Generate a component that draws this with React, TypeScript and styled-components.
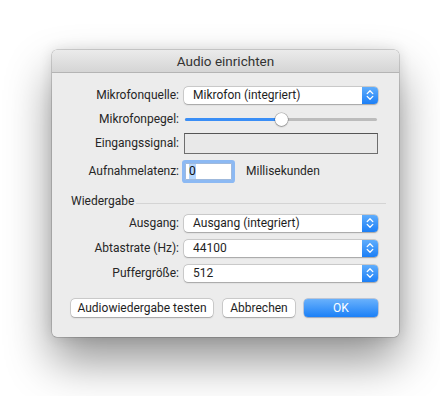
import React from "react";
import styled, { createGlobalStyle } from "styled-components";

const GlobalStyle = createGlobalStyle`
  html, body {
    margin: 0;
    padding: 0;
    background: #ffffff;
  }
  body {
    font-family: "Roboto", "Liberation Sans", sans-serif;
    font-size: 12px;
    color: #222;
  }
`;

const Page = styled.div`
  width: 440px;
  height: 396px;
  overflow: hidden;
  padding: 50px 0 0 52px;
  box-sizing: border-box;
`;

const Window = styled.div`
  width: 347px;
  height: 287px;
  background: #ececec;
  border-radius: 5px;
  box-shadow: 0 24px 46px rgba(0, 0, 0, 0.42), 0 0 14px rgba(0, 0, 0, 0.12),
    0 0 0 0.5px rgba(0, 0, 0, 0.28);
  display: flex;
  flex-direction: column;
  overflow: hidden;
`;

const TitleBar = styled.div`
  height: 22px;
  background: linear-gradient(#ebebeb, #d5d5d5);
  border-bottom: 1px solid #b4b4b4;
  display: flex;
  align-items: center;
  justify-content: center;
  font-size: 13.5px;
  color: #333;
`;

const Body = styled.div`
  display: flex;
  flex-direction: column;
  padding: 8px 21px 0 0;
`;

const Row = styled.div<{ $h: number; $mt?: number }>`
  display: flex;
  align-items: center;
  gap: 5px;
  height: ${(p) => p.$h}px;
  margin-top: ${(p) => p.$mt ?? 0}px;
`;

const Label = styled.div`
  width: 127px;
  text-align: right;
  color: #262626;
  white-space: nowrap;
`;

const Popup = styled.div`
  width: 194px;
  height: 17px;
  box-sizing: border-box;
  display: flex;
  align-items: center;
  background: #fff;
  border-radius: 4px;
  box-shadow: 0 0 0 0.5px rgba(0, 0, 0, 0.22), 0 0.5px 1.5px rgba(0, 0, 0, 0.22);
  overflow: hidden;
`;

const PopupText = styled.div`
  flex: 1;
  padding-left: 9px;
  color: #1e1e1e;
  white-space: nowrap;
`;

const Stepper = styled.div`
  width: 16px;
  height: 100%;
  background: linear-gradient(#5fadfc, #1c7ff6);
  display: flex;
  align-items: center;
  justify-content: center;
`;

const SliderTrack = styled.div`
  position: relative;
  width: 192px;
  margin-left: 1px;
  height: 3px;
  border-radius: 2px;
  background: #bcbcbc;
`;

const SliderFill = styled.div`
  height: 100%;
  border-radius: 2px;
  background: #3a8ef6;
`;

const Knob = styled.div`
  position: absolute;
  top: 50%;
  width: 13px;
  height: 13px;
  margin: -6.5px 0 0 -6.5px;
  border-radius: 50%;
  background: #fff;
  box-shadow: 0 0 0 0.5px rgba(0, 0, 0, 0.3), 0 1px 1.5px rgba(0, 0, 0, 0.25);
`;

const Meter = styled.div`
  width: 194px;
  height: 21px;
  box-sizing: border-box;
  border: 1px solid #6e6e6e;
  border-top-color: #555;
  background: #e9e9e9;
`;

const Field = styled.div`
  width: 47px;
  height: 17px;
  box-sizing: border-box;
  background: #fff;
  border: 1px solid #9fb9dc;
  box-shadow: 0 0 0 3px #8cb9f3;
  border-radius: 1px;
  margin-left: 1px;
  display: flex;
  align-items: center;
  padding-left: 3px;
`;

const Selected = styled.span`
  background: #b4d6fe;
  color: #111;
  line-height: 15px;
`;

const Unit = styled.div`
  margin-left: 9px;
  color: #262626;
`;

const Section = styled.div`
  display: flex;
  align-items: center;
  margin: 11px 0 3px 19px;
  gap: 2px;
  height: 16px;
`;

const SectionTitle = styled.div`
  color: #262626;
`;

const Rule = styled.div`
  flex: 1;
  height: 1px;
  margin-top: 4px;
  margin-right: -8px;
  background: #d4d4d4;
`;

const Buttons = styled.div`
  display: flex;
  align-items: center;
  margin: 15px 0 0 19px;
  height: 18px;
`;

const Button = styled.div<{ $w: number; $primary?: boolean; $ml?: number }>`
  width: ${(p) => p.$w}px;
  height: 18px;
  margin-left: ${(p) => p.$ml ?? 0}px;
  box-sizing: border-box;
  border-radius: 4px;
  display: flex;
  align-items: center;
  justify-content: center;
  white-space: nowrap;
  color: ${(p) => (p.$primary ? "#fff" : "#1e1e1e")};
  background: ${(p) =>
    p.$primary ? "linear-gradient(#69b1fc, #1b80f7)" : "#fff"};
  box-shadow: ${(p) =>
    p.$primary
      ? "0 0 0 0.5px rgba(0, 60, 160, 0.35), 0 0.5px 1.5px rgba(0, 0, 0, 0.2)"
      : "0 0 0 0.5px rgba(0, 0, 0, 0.22), 0 0.5px 1.5px rgba(0, 0, 0, 0.22)"};
`;

const Arrows = () => (
  <svg width="8" height="12" viewBox="0 0 8 12">
    <path
      d="M1.2 4.6 L4 1.8 L6.8 4.6 M1.2 7.4 L4 10.2 L6.8 7.4"
      fill="none"
      stroke="#fff"
      strokeWidth="1.3"
      strokeLinecap="round"
      strokeLinejoin="round"
    />
  </svg>
);

function Select({ value }: { value: string }) {
  return (
    <Popup>
      <PopupText>{value}</PopupText>
      <Stepper>
        <Arrows />
      </Stepper>
    </Popup>
  );
}

const level = 0.5;

export default function App() {
  return (
    <Page>
      <GlobalStyle />
      <Window>
        <TitleBar>Audio einrichten</TitleBar>
        <Body>
          <Row $h={22} $mt={3}>
            <Label>Mikrofonquelle:</Label>
            <Select value="Mikrofon (integriert)" />
          </Row>
          <Row $h={22} $mt={2}>
            <Label>Mikrofonpegel:</Label>
            <SliderTrack>
              <SliderFill style={{ width: `${level * 100}%` }} />
              <Knob style={{ left: `${level * 100}%` }} />
            </SliderTrack>
          </Row>
          <Row $h={22} $mt={2}>
            <Label>Eingangssignal:</Label>
            <Meter />
          </Row>
          <Row $h={22} $mt={6}>
            <Label>Aufnahmelatenz:</Label>
            <Field>
              <Selected>0</Selected>
            </Field>
            <Unit>Millisekunden</Unit>
          </Row>
          <Section>
            <SectionTitle>Wiedergabe</SectionTitle>
            <Rule />
          </Section>
          <Row $h={22}>
            <Label>Ausgang:</Label>
            <Select value="Ausgang (integriert)" />
          </Row>
          <Row $h={22} $mt={3}>
            <Label>Abtastrate (Hz):</Label>
            <Select value="44100" />
          </Row>
          <Row $h={22} $mt={3}>
            <Label>Puffergröße:</Label>
            <Select value="512" />
          </Row>
          <Buttons>
            <Button $w={142}>Audiowiedergabe testen</Button>
            <Button $w={72} $ml={10}>Abbrechen</Button>
            <Button $w={74} $ml={9} $primary>
              OK
            </Button>
          </Buttons>
        </Body>
      </Window>
    </Page>
  );
}
